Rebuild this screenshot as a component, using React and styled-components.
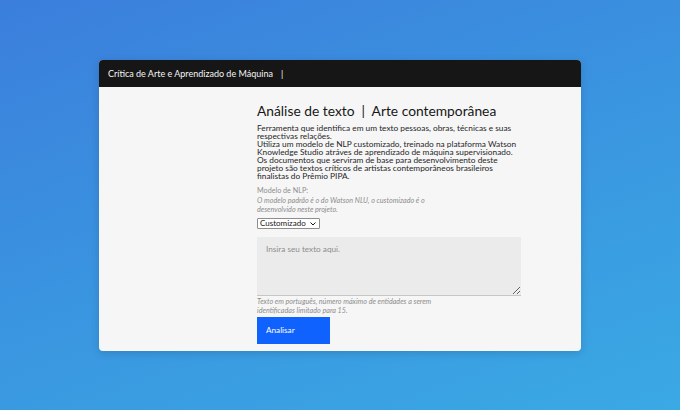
import styled, { createGlobalStyle } from 'styled-components';

const GlobalStyle = createGlobalStyle`
  html, body {
    margin: 0;
    padding: 0;
  }
  body {
    font-family: Lato, 'Open Sans', sans-serif;
  }
`;

const Page = styled.div`
  width: 680px;
  height: 410px;
  display: flex;
  align-items: center;
  justify-content: center;
  background: linear-gradient(160deg, #3b7edc 0%, #3a95e0 50%, #3aa9e4 100%);
`;

const Card = styled.div`
  width: 482px;
  height: 291px;
  border-radius: 4px;
  overflow: hidden;
  background: #f6f6f6;
  display: flex;
  flex-direction: column;
  box-shadow: 0 2px 8px rgba(0, 0, 0, 0.15);
`;

const Header = styled.header`
  height: 27px;
  flex: none;
  background: #161616;
  color: #f4f4f4;
  display: flex;
  align-items: center;
  padding: 0 9px;
  font-size: 9px;
`;

const Divider = styled.span`
  margin-left: 8px;
`;

const Body = styled.main`
  flex: 1;
  padding: 15px 0 0 158px;
  color: #161616;
`;

const Column = styled.div`
  width: 264px;
  display: flex;
  flex-direction: column;
`;

const Title = styled.h1`
  margin: 0 0 4px;
  font-size: 13.8px;
  font-weight: 400;
  line-height: 18px;
  white-space: nowrap;
`;

const Intro = styled.p`
  margin: 0 0 6px;
  font-size: 8.3px;
  line-height: 8px;
  color: #262626;
`;

const Label = styled.div`
  font-size: 7.2px;
  line-height: 10px;
  color: #8d8d8d;
`;

const Help = styled.div`
  font-size: 7.2px;
  line-height: 9px;
  font-style: italic;
  color: #8d8d8d;
  width: 200px;
  margin-bottom: ${(p) => p.$mb || 0}px;
`;

const SelectWrap = styled.div`
  position: relative;
  align-self: flex-start;
  margin: 1px 0 8px;
  svg {
    position: absolute;
    right: 4px;
    top: 4px;
    pointer-events: none;
  }
`;

const Select = styled.select`
  appearance: none;
  display: block;
  font-family: inherit;
  font-size: 8px;
  height: 11px;
  line-height: 9px;
  padding: 0 13px 0 2px;
  border: 1px solid #8d8d8d;
  border-radius: 1px;
  background: #fff;
  color: #161616;
`;

const TextArea = styled.textarea`
  box-sizing: border-box;
  width: 264px;
  height: 59px;
  border: none;
  border-bottom: 1px solid #c6c6c6;
  background: #ebebeb;
  font-family: inherit;
  font-size: 8.2px;
  padding: 7px 9px;
  margin: 0 0 1px;
  color: #161616;
  &::placeholder {
    color: #8d8d8d;
  }
`;

const Button = styled.button`
  align-self: flex-start;
  width: 73px;
  height: 27px;
  border: none;
  background: #0f62fe;
  color: #fff;
  font-family: inherit;
  font-size: 8.2px;
  text-align: left;
  padding: 0 9px;
`;

export default function App() {
  return (
    <>
      <GlobalStyle />
      <Page>
        <Card>
          <Header>
            Crítica de Arte e Aprendizado de Máquina
            <Divider>|</Divider>
          </Header>
          <Body>
            <Column>
              <Title>Análise de texto&nbsp; | &nbsp;Arte contemporânea</Title>
              <Intro>
                Ferramenta que identifica em um texto pessoas, obras, técnicas e suas respectivas relações.
                <br />
                Utiliza um modelo de NLP customizado, treinado na plataforma Watson Knowledge Studio atráves
                de aprendizado de máquina supervisionado.
                <br />
                Os documentos que serviram de base para desenvolvimento deste projeto são textos críticos de
                artistas contemporâneos brasileiros finalistas do Prêmio PIPA.
              </Intro>
              <Label>Modelo de NLP:</Label>
              <Help $mb={3}>
                O modelo padrão é o do Watson NLU, o customizado é o desenvolvido neste projeto.
              </Help>
              <SelectWrap>
                <Select defaultValue="custom">
                  <option value="custom">Customizado</option>
                  <option value="nlu">Watson NLU</option>
                </Select>
                <svg width="6" height="4" viewBox="0 0 6 4">
                  <path d="M0.5 0.5 L3 3 L5.5 0.5" fill="none" stroke="#161616" strokeWidth="1" />
                </svg>
              </SelectWrap>
              <TextArea placeholder="Insira seu texto aqui." />
              <Help $mb={2}>
                Texto em português, número máximo de entidades a serem identificadas limitado para 15.
              </Help>
              <Button>Analisar</Button>
            </Column>
          </Body>
        </Card>
      </Page>
    </>
  );
}
